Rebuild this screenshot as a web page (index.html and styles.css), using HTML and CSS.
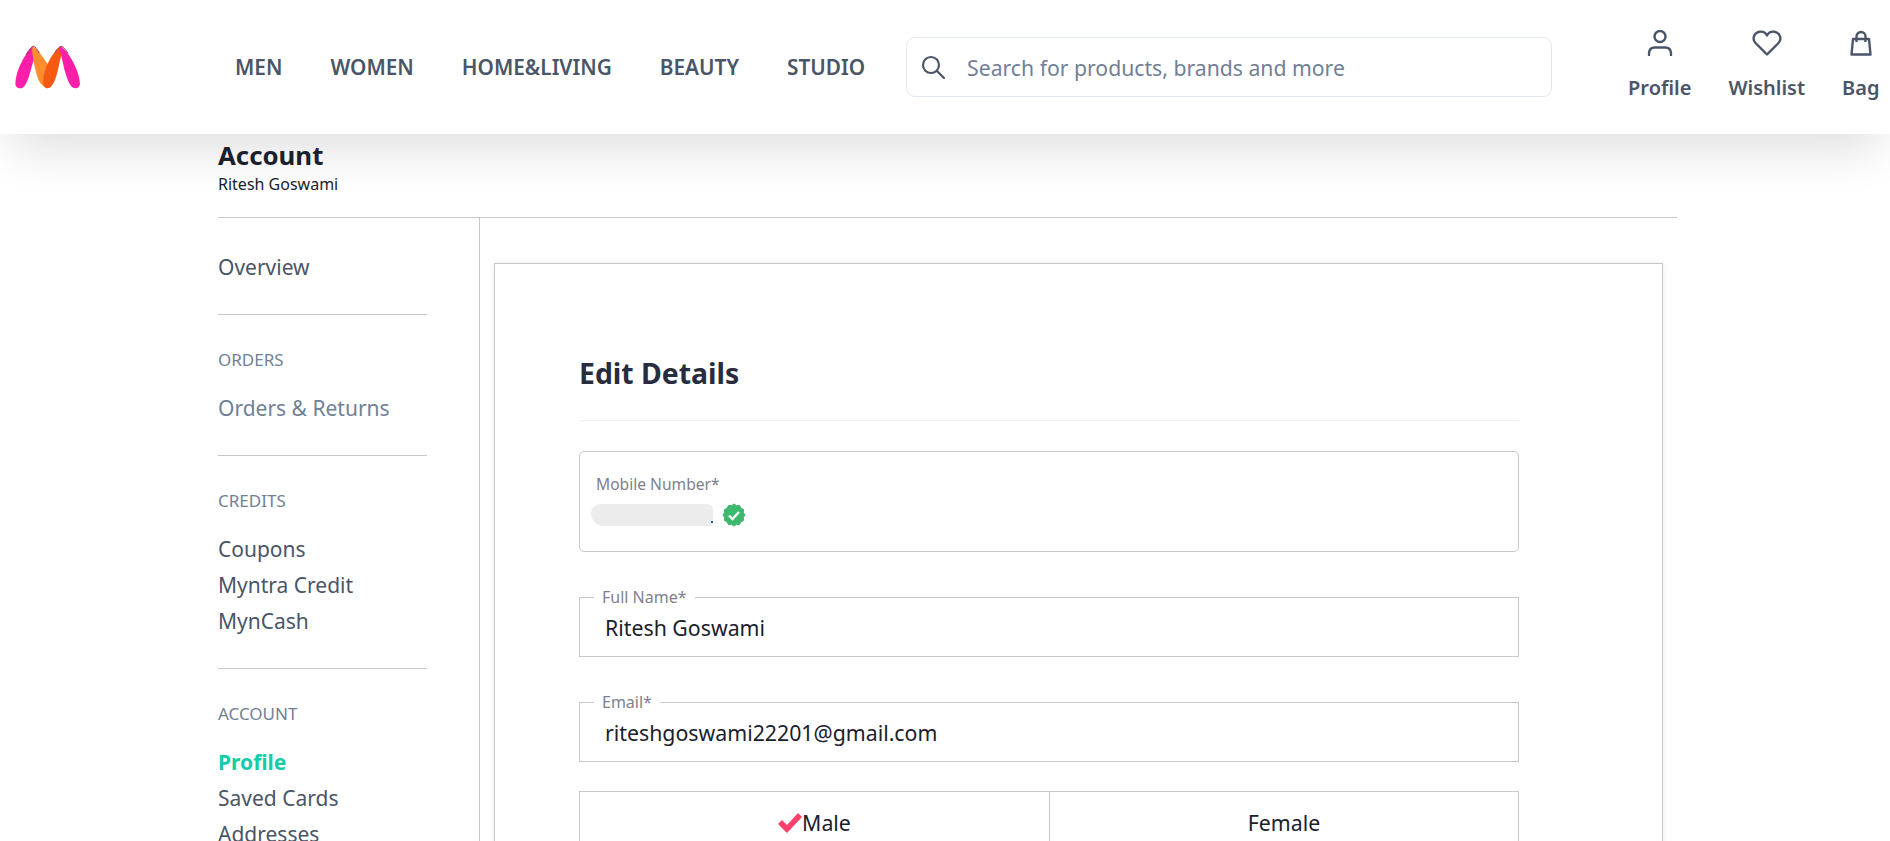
FILE: index.html
```html
<!DOCTYPE html>
<html lang="en">
<head>
<meta charset="utf-8">
<title>Myntra - Edit Profile</title>
<link rel="stylesheet" href="styles.css">
</head>
<body>
<header class="topbar">
  <svg class="logo" viewBox="45 70 200 135" aria-label="Myntra">
    <path fill="#f91fa8" d="M100 73C76 92 45 150 45 188C45 198 52 203 60 203C72 203 80 186 87 165L104 105Z"/>
    <path fill="#fd8d2d" d="M96 78C106 72 128 105 146 132C135 150 128 172 134 197C118 190 110 165 104 135C100 115 96 95 96 78Z"/>
    <path fill="#f55a13" d="M185 75C163 84 130 140 130 185C130 197 136 203 145 203C158 203 170 175 177 140L186 100Z"/>
    <path fill="#f91fa8" d="M183 74C205 85 243 150 243 188C243 198 236 203 228 203C213 203 203 175 194 140C189 115 183 95 180 80Z"/>
    <path fill="none" stroke="#a3243c" stroke-width="3" d="M78 100C86 86 94 75 100 74C106 75 112 84 118 94M167 92C173 82 180 75 186 74C192 75 198 82 206 96"/>
  </svg>
  <nav class="nav">
    <a class="nav-link">MEN</a>
    <a class="nav-link">WOMEN</a>
    <a class="nav-link">HOME&amp;LIVING</a>
    <a class="nav-link">BEAUTY</a>
    <a class="nav-link">STUDIO</a>
  </nav>
  <div class="search">
    <svg class="search-icon" viewBox="0 0 24 24" fill="none" stroke="#4a5568" stroke-width="2.2" stroke-linecap="round"><circle cx="10" cy="10" r="8"/><path d="M16 16l7 7"/></svg>
    <span class="search-text">Search for products, brands and more</span>
  </div>
  <div class="actions">
    <div class="action">
      <svg class="action-icon" viewBox="0 0 28 26" fill="none" stroke="#4a5568" stroke-width="2.4" stroke-linecap="round"><circle cx="14" cy="6.5" r="5.5"/><path d="M3 25v-1.500c0-4 2.500-6 6-6h10c3.500 0 6 2 6 6v1.500"/></svg>
      <span>Profile</span>
    </div>
    <div class="action">
      <svg class="action-icon" viewBox="0 0 30 26" fill="none" stroke="#4a5568" stroke-width="2.4" stroke-linejoin="round"><path d="M15 24.500L3.500 13C0 9.500 1.500 3 7.500 1.800C11 1.200 13.800 3.300 15 5.500C16.200 3.300 19 1.200 22.500 1.800C28.500 3 30 9.500 26.500 13Z"/></svg>
      <span>Wishlist</span>
    </div>
    <div class="action">
      <svg class="action-icon" viewBox="0 0 24 26" fill="none" stroke="#4a5568" stroke-width="2.4" stroke-linejoin="round"><path d="M4 9h16l1.500 15.500h-19Z"/><path d="M7.500 12V6.500a4.500 4.500 0 0 1 9 0V12"/></svg>
      <span>Bag</span>
    </div>
  </div>
</header>

<main class="page">
  <div class="title-block">
    <h1 class="title">Account</h1>
    <p class="subtitle">Ritesh Goswami</p>
  </div>
  <div class="columns">
    <aside class="sidebar">
      <div class="side-section side-first">
        <a class="side-link">Overview</a>
      </div>
      <div class="side-section">
        <h2 class="side-head">ORDERS</h2>
        <a class="side-link side-muted">Orders &amp; Returns</a>
      </div>
      <div class="side-section">
        <h2 class="side-head">CREDITS</h2>
        <a class="side-link">Coupons</a>
        <a class="side-link">Myntra Credit</a>
        <a class="side-link">MynCash</a>
      </div>
      <div class="side-section">
        <h2 class="side-head">ACCOUNT</h2>
        <a class="side-link side-active">Profile</a>
        <a class="side-link">Saved Cards</a>
        <a class="side-link">Addresses</a>
      </div>
    </aside>
    <section class="card">
      <h2 class="card-title">Edit Details</h2>
      <div class="mobile-box">
        <div class="mobile-label">Mobile Number*</div>
        <div class="mobile-row">
          <span class="redacted"></span>
          <svg class="badge" viewBox="0 0 24 24"><polygon fill="#3cb96e" stroke="#3cb96e" stroke-linejoin="round" points="23,12 21.37,14.51 21.53,17.5 18.86,18.86 17.5,21.53 14.51,21.37 12,23 9.49,21.37 6.5,21.53 5.14,18.86 2.47,17.5 2.63,14.51 1,12 2.63,9.49 2.47,6.5 5.14,5.14 6.5,2.47 9.49,2.63 12,1 14.51,2.63 17.5,2.47 18.86,5.14 21.53,6.5 21.37,9.49"/><path d="M7 12.500l3.500 3.500 6.500-7" fill="none" stroke="#fff" stroke-width="2.400"/></svg>
        </div>
      </div>
      <fieldset class="field">
        <legend class="field-label">Full Name*</legend>
        <div class="field-value">Ritesh Goswami</div>
      </fieldset>
      <fieldset class="field">
        <legend class="field-label">Email*</legend>
        <div class="field-value">riteshgoswami22201@gmail.com</div>
      </fieldset>
      <div class="gender">
        <div class="gender-option">
          <svg class="tick" viewBox="0 0 24 20"><path fill="#ff3f6c" d="M0 11l4-4 5 5L20 0l4 4L9 20Z"/></svg>
          <span>Male</span>
        </div>
        <div class="gender-option">Female</div>
      </div>
    </section>
  </div>
</main>
</body>
</html>
```

FILE: styles.css
```css
* { box-sizing: border-box; }

html, body {
  margin: 0;
  height: 100vh;
  overflow: hidden;
  background: #fff;
  font-family: "Noto Sans", "Open Sans", sans-serif;
  color: #1a202c;
}

h1, h2, p { margin: 0; }

.topbar {
  height: 134px;
  display: flex;
  align-items: center;
  padding-left: 15px;
  background: #fff;
  box-shadow: 0 25px 50px -12px rgba(0, 0, 0, .14);
}

.logo { width: 66px; height: 44px; flex: none; }

.nav {
  display: flex;
  gap: 48px;
  margin-left: 154px;
  flex: none;
}

.nav-link {
  font-size: 20.8px;
  font-weight: 600;
  line-height: 28px;
  color: #4a5568;
}

.search {
  width: 646px;
  height: 60px;
  margin-left: 41px;
  flex: none;
  display: flex;
  align-items: center;
  padding-left: 14px;
  gap: 22px;
  border: 1px solid #e2e8f0;
  border-radius: 9px;
  background: #fff;
}

.search-icon { width: 24px; height: 24px; flex: none; }

.search-text {
  font-size: 21.2px;
  color: #718096;
}

.actions {
  display: flex;
  gap: 37px;
  margin-left: 76px;
  flex: none;
  margin-top: -3px;
}

.action {
  display: flex;
  flex-direction: column;
  align-items: center;
  gap: 19px;
  font-size: 20px;
  font-weight: 600;
  line-height: 26px;
  color: #4a5568;
}

.action-icon { height: 26px; width: 30px; }

.page { padding-left: 218px; width: 1677px; }

.title-block {
  padding-top: 6px;
  height: 84px;
  border-bottom: 1px solid #c8c8c8;
}

.title {
  font-size: 25.8px;
  font-weight: 700;
  line-height: 30px;
}

.subtitle {
  font-size: 16px;
  line-height: 28px;
}

.columns { display: flex; }

.sidebar {
  width: 262px;
  padding-right: 52px;
  border-right: 1px solid #c8c8c8;
  flex: none;
  height: 640px;
}

.side-section {
  border-bottom: 1px solid #c8c8c8;
  padding: 32px 0 29px;
}

.side-section:last-child { border-bottom: 0; }
.side-first { padding-top: 31px; }

.side-head {
  padding-top: 1px;
  font-size: 17px;
  font-weight: 400;
  line-height: 24px;
  color: #718096;
  margin-bottom: 18px;
}

.side-link {
  display: block;
  font-size: 21px;
  line-height: 36px;
  color: #4a5568;
}

.side-muted { color: #718096; }
.side-active { color: #14cda8; font-weight: 700; }

.card {
  width: 1169px;
  height: 700px;
  margin: 45px 0 0 14px;
  padding: 89px 143px 0 84px;
  border: 1px solid #c8c8c8;
  box-shadow: 0 0 6px rgba(0, 0, 0, .08);
  flex: none;
}

.card-title {
  font-size: 28.4px;
  font-weight: 700;
  line-height: 40px;
  padding-bottom: 27px;
  border-bottom: 1px solid #eeeeee;
  color: #282c3f;
}

.mobile-box {
  position: relative;
  height: 101px;
  margin-top: 30px;
  padding: 20px 16px 0;
  border: 1px solid #c8c8c8;
  border-radius: 5px;
}

.mobile-label {
  font-size: 15.6px;
  line-height: 24px;
  color: #7e818c;
}

.mobile-row {
  display: flex;
  align-items: center;
  gap: 9px;
  margin-top: 7px;
  height: 24px;
}

.redacted {
  position: relative;
  width: 122px;
  height: 22px;
  margin-left: -5px;
  border-radius: 10px 6px 4px 14px;
  background: #ececec;
}

.redacted::after {
  content: "";
  position: absolute;
  right: 0;
  bottom: 3px;
  width: 2px;
  height: 2px;
  background: #2a5a8c;
}

.badge { width: 24px; height: 24px; }

.field {
  margin: 34px 0 0;
  padding: 2px 0 10px 25px;
  border: 1px solid #c8c8c8;
  min-width: 0;
}

.field-label {
  margin-left: -11px;
  padding: 0 8px;
  font-size: 16px;
  line-height: 22px;
  color: #7e818c;
}

.field-value {
  font-size: 21.3px;
  line-height: 36px;
}

.gender {
  display: grid;
  grid-template-columns: 1fr 1fr;
  height: 80px;
  margin-top: 29px;
  border: 1px solid #c8c8c8;
}

.gender-option {
  display: flex;
  justify-content: center;
  padding-top: 13px;
  font-size: 21.3px;
  line-height: 36px;
}

.gender-option + .gender-option { border-left: 1px solid #c8c8c8; }

.tick { width: 24px; height: 20px; margin-top: 8px; }
```
